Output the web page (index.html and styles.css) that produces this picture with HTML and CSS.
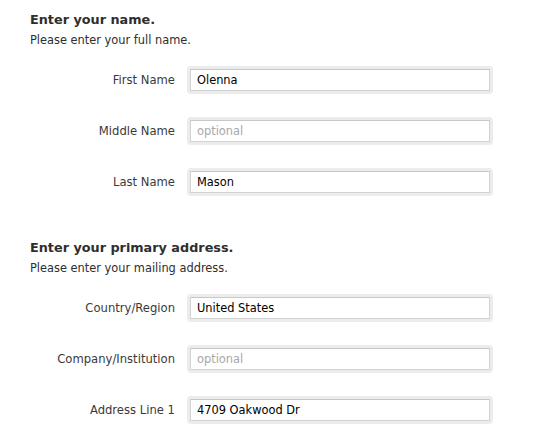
FILE: index.html
```html
<!DOCTYPE html>
<html>
<head>
<meta charset="utf-8">
<title>Account details</title>
<link rel="stylesheet" href="styles.css">
</head>
<body>
<div class="page">
  <section class="section">
    <h2 class="section-title">Enter your name.</h2>
    <p class="section-hint">Please enter your full name.</p>
    <div class="rows">
      <div class="row">
        <label class="row-label" for="first">First Name</label>
        <div class="field"><input class="field-input" id="first" type="text" value="Olenna"></div>
      </div>
      <div class="row">
        <label class="row-label" for="middle">Middle Name</label>
        <div class="field"><input class="field-input" id="middle" type="text" placeholder="optional"></div>
      </div>
      <div class="row">
        <label class="row-label" for="last">Last Name</label>
        <div class="field"><input class="field-input" id="last" type="text" value="Mason"></div>
      </div>
    </div>
  </section>
  <section class="section">
    <h2 class="section-title">Enter your primary address.</h2>
    <p class="section-hint">Please enter your mailing address.</p>
    <div class="rows">
      <div class="row">
        <label class="row-label" for="country">Country/Region</label>
        <div class="field"><input class="field-input" id="country" type="text" value="United States"></div>
      </div>
      <div class="row">
        <label class="row-label" for="company">Company/Institution</label>
        <div class="field"><input class="field-input" id="company" type="text" placeholder="optional"></div>
      </div>
      <div class="row">
        <label class="row-label" for="addr1">Address Line 1</label>
        <div class="field"><input class="field-input" id="addr1" type="text" value="4709 Oakwood Dr"></div>
      </div>
    </div>
  </section>
</div>
</body>
</html>
```
FILE: styles.css
```css
html, body {
  margin: 0;
  padding: 0;
  background: #ffffff;
}

body {
  font-family: "DejaVu Sans", "Liberation Sans", sans-serif;
  font-size: 11.4px;
  color: #333333;
}

.page {
  padding: 11px 0 0 30px;
}

.section + .section {
  margin-top: 43px;
}

.section-title {
  margin: 0;
  font-size: 12.8px;
  line-height: 18px;
  font-weight: bold;
  color: #2e2e2e;
}

.section-hint {
  margin: 3px 0 0;
  font-size: 11.4px;
  line-height: 16px;
  color: #2e2e2e;
}

.rows {
  margin-top: 18px;
  display: flex;
  flex-direction: column;
  gap: 23px;
}

.row {
  display: flex;
  align-items: center;
}

.row-label {
  width: 145px;
  margin-right: 12px;
  text-align: right;
  font-size: 11.6px;
  color: #3a3a3a;
  white-space: nowrap;
}

.field {
  padding: 3px;
  background: #ececec;
  border-radius: 4px;
}

.field-input {
  display: block;
  box-sizing: border-box;
  width: 300px;
  height: 22px;
  margin: 0;
  padding: 0 6px;
  border: 1px solid #d2d2d2;
  border-top-color: #c8c8c8;
  border-radius: 0;
  background: #ffffff;
  font-family: "DejaVu Sans", "Liberation Sans", sans-serif;
  font-size: 11.4px;
  color: #000000;
  outline: none;
}

.field-input::placeholder {
  color: #a8a8a8;
}
```
